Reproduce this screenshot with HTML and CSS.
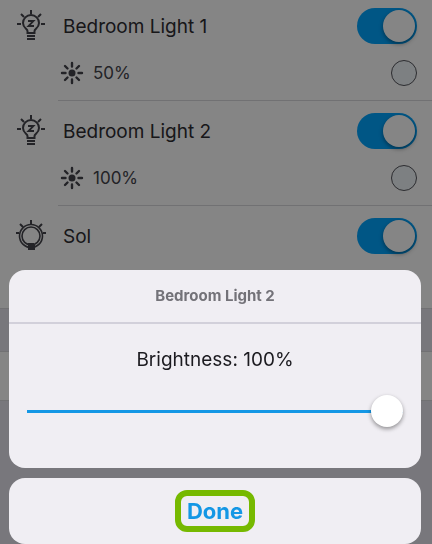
FILE: index.html
```
<!DOCTYPE html>
<html lang="en">
<head>
  <meta charset="UTF-8">
  <meta name="viewport" content="width=device-width, initial-scale=1.0">
  <title>Lights</title>
  <link rel="stylesheet" href="styles.css">
</head>
<body>
  <!-- Shared icons -->
  <svg class="defs" width="0" height="0" aria-hidden="true">
    <symbol id="bulb" viewBox="0 0 32 32">
      <g fill="none" stroke="currentColor" stroke-width="2">
        <path d="M12.500 23v-2c0-2-4.500-3-4.500-8a8 8 0 0 1 16 0c0 5-4.500 6-4.500 8v2z"/>
        <path d="M16 0v4M6 4l3 3M26 4l-3 3M2 14h4M26 14h4"/>
        <path d="M12 26h8M12 29h8"/>
        <path d="M13 11h5.500L13.500 16H19" stroke-width="1.800"/>
      </g>
    </symbol>
    <symbol id="globe" viewBox="0 0 32 32">
      <g fill="none" stroke="currentColor">
        <circle cx="16" cy="16" r="11.500" stroke-width="1.600"/>
        <circle cx="16" cy="16" r="9" stroke-width="1.600"/>
        <path d="M16 0v4M5 4l3 3M27 4l-3 3M1 13h3M28 13h3" stroke-width="2"/>
      </g>
      <path d="M13 23h6v1h1v6h-7v-6h-1z" fill="currentColor"/>
    </symbol>
    <symbol id="sun" viewBox="0 0 24 24">
      <circle cx="12" cy="12" r="3.500" fill="currentColor"/>
      <path d="M12 2v3.500M12 18.500V22M2 12h3.500M18.500 12H22M5 5l2.500 2.500M16.500 16.500L19 19M5 19l2.500-2.500M16.500 7.500L19 5" fill="none" stroke="currentColor" stroke-width="2.400" stroke-linecap="round"/>
    </symbol>
  </svg>

  <main>
    <ul class="lights">
      <li class="light">
        <svg class="light-icon"><use href="#bulb"/></svg>
        <div class="light-body">
          <div class="row">
            <label for="light1">Bedroom Light 1</label>
            <input class="switch" id="light1" type="checkbox" checked>
          </div>
          <div class="row level">
            <svg class="sun"><use href="#sun"/></svg>
            <span>50%</span>
            <button class="color" aria-label="Bedroom Light 1 color"></button>
          </div>
        </div>
      </li>
      <li class="light">
        <svg class="light-icon"><use href="#bulb"/></svg>
        <div class="light-body">
          <div class="row">
            <label for="light2">Bedroom Light 2</label>
            <input class="switch" id="light2" type="checkbox" checked>
          </div>
          <div class="row level">
            <svg class="sun"><use href="#sun"/></svg>
            <span>100%</span>
            <button class="color" aria-label="Bedroom Light 2 color"></button>
          </div>
        </div>
      </li>
      <li class="light">
        <svg class="light-icon"><use href="#globe"/></svg>
        <div class="light-body">
          <div class="row">
            <label for="light3">Sol</label>
            <input class="switch" id="light3" type="checkbox" checked>
          </div>
        </div>
      </li>
    </ul>
    <div class="blank-row"></div>
  </main>

  <!-- Brightness sheet -->
  <div class="overlay">
    <div class="sheet" role="dialog" aria-labelledby="sheetTitle">
      <h2 id="sheetTitle">Bedroom Light 2</h2>
      <div class="sheet-body">
        <label for="brightness">Brightness: 100%</label>
        <input class="slider" id="brightness" type="range" min="0" max="100" value="100">
      </div>
    </div>
    <div class="sheet actions">
      <button class="done">Done</button>
    </div>
  </div>
</body>
</html>
```
FILE: styles.css
```
:root {
  --page-bg: #e6e5ee;
  --row-bg: #fff;
  --sheet-bg: #f0eef3;
  --line: #d8d8dc;
  --blue: #1497e5;
  --switch-blue: #00a5ff;
  --green: #76b900;
}
* {
  box-sizing: border-box;
}
body {
  margin: 0;
  min-height: 100vh;
  background: var(--page-bg);
  color: #222126;
  font-family: Inter, "Liberation Sans", sans-serif;
  overflow: hidden;
}
.defs {
  position: absolute;
}
.lights {
  margin: 0;
  padding: 0;
  list-style: none;
  background: var(--row-bg);
  border-bottom: 1px solid var(--line);
}
.light {
  display: flex;
  color: #44444b;
}
.light-icon {
  flex: none;
  width: 32px;
  height: 32px;
  margin: 10px 11px 0 15px;
}
.light-body {
  flex: 1;
  padding: 0 0 7px 5px;
  border-bottom: 1px solid var(--line);
}
.light + .light {
  padding-top: 4px;
}
.light:last-child .light-body {
  padding-bottom: 46px;
  border-bottom: none;
}
.row {
  display: flex;
  align-items: center;
  height: 52px;
  padding-right: 15px;
}
.row label {
  flex: 1;
  color: #2e2d32;
  font-size: 19px;
}
.switch {
  appearance: none;
  flex: none;
  display: flex;
  justify-content: flex-end;
  width: 60px;
  height: 36px;
  margin: 0;
  padding: 2px;
  border-radius: 18px;
  background: var(--switch-blue);
}
.switch::before {
  content: "";
  width: 32px;
  height: 32px;
  border-radius: 50%;
  background: #fff;
  box-shadow: 0 2px 4px rgba(0, 0, 0, 0.4);
}
.level {
  height: 41px;
  font-size: 17px;
}
.sun {
  width: 24px;
  height: 24px;
  margin: 0 9px 0 -3px;
}
.level span {
  flex: 1;
}
.color {
  width: 26px;
  height: 26px;
  padding: 0;
  border: 1px solid #55555c;
  border-radius: 50%;
  background: #eff6f9;
}
.blank-row {
  height: 50px;
  margin-top: 42px;
  background: var(--row-bg);
  border: solid var(--line);
  border-width: 1px 0;
}
.overlay {
  position: fixed;
  inset: 0;
  display: flex;
  flex-direction: column;
  justify-content: flex-end;
  gap: 10px;
  padding: 0 11px 0 9px;
  background: rgba(0, 0, 0, 0.48);
}
.sheet {
  border-radius: 16px;
  background: var(--sheet-bg);
  text-align: center;
}
.sheet h2 {
  margin: 0;
  border-bottom: 2px solid #d2d0da;
  color: #737278;
  font-size: 15px;
  font-weight: 700;
  line-height: 52px;
}
.sheet-body {
  display: flex;
  flex-direction: column;
  gap: 23px;
  padding: 24px 18px 41px;
}
.sheet-body label {
  color: #1c1b20;
  font-size: 19px;
  line-height: 24px;
}
.slider {
  appearance: none;
  width: 100%;
  height: 32px;
  margin: 0;
  background: linear-gradient(var(--blue), var(--blue)) center / 100% 3px no-repeat;
}
.slider::-webkit-slider-thumb {
  appearance: none;
  width: 32px;
  height: 32px;
  border-radius: 50%;
  background: #fff;
  box-shadow: 0 2px 4px rgba(0, 0, 0, 0.4);
}
.actions {
  padding: 12px 0;
}
.done {
  display: block;
  width: 80px;
  height: 42px;
  margin: 0 auto;
  padding: 0;
  border: 6px solid var(--green);
  border-radius: 12px;
  background: none;
  color: var(--blue);
  font-family: inherit;
  font-size: 22px;
  font-weight: 700;
}
```
